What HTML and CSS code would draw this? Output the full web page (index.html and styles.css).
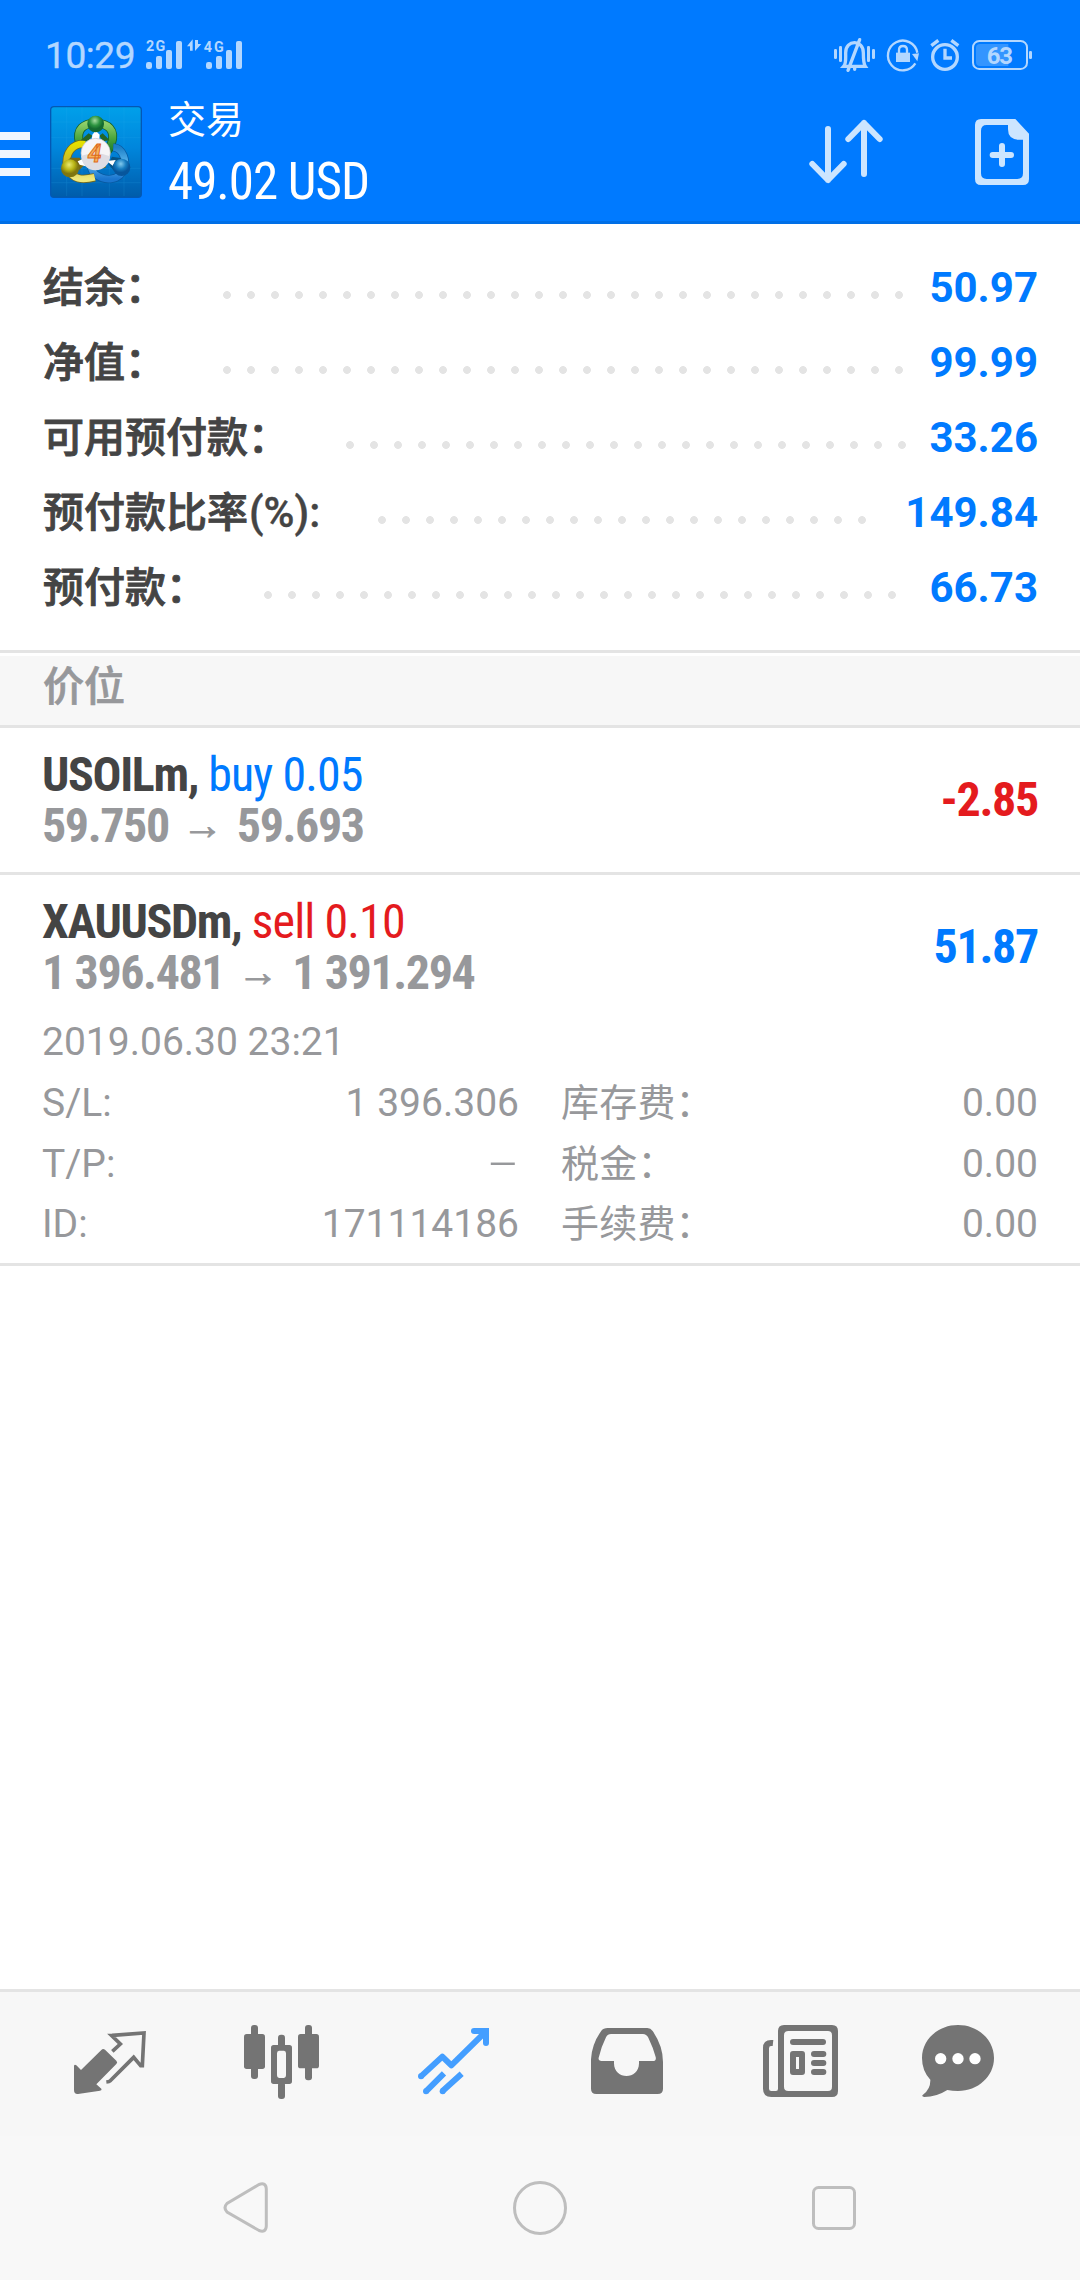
FILE: index.html
```html
<!DOCTYPE html>
<html lang="zh-CN">
<head>
<meta charset="utf-8">
<title>交易</title>
<link rel="stylesheet" href="styles.css">
</head>
<body>
<div class="screen">
  <header class="header">
    <div class="status">
      <span class="clock">10:29</span>
      <svg class="signal" viewBox="435 105 300 120">
        <g class="st">
          <rect x="438" y="186" width="18" height="21" rx="7"/><rect x="468" y="168" width="18" height="39" rx="6"/><rect x="498" y="150" width="18" height="57" rx="6"/><rect x="528" y="123" width="18" height="84" rx="6"/>
          <rect x="618" y="186" width="18" height="21" rx="7"/><rect x="648" y="168" width="18" height="39" rx="6"/><rect x="678" y="150" width="18" height="57" rx="6"/><rect x="708" y="123" width="18" height="84" rx="6"/>
          <path d="M561 139L578 118V152H570V139ZM585 120H594V132H604L585 153Z"/>
          <text x="438" y="152" textLength="58">2G</text><text x="611" y="155" textLength="60">4G</text>
        </g>
      </svg>
      <svg class="indicators" viewBox="150 105 630 120">
        <g class="st">
          <rect x="162" y="147" width="9" height="30" rx="4"/><rect x="177" y="138" width="9" height="48" rx="4"/><rect x="261" y="138" width="9" height="48" rx="4"/><rect x="276" y="147" width="9" height="30" rx="4"/>
          <rect x="348" y="158" width="42" height="28"/>
          <path d="M396 162L417 160L412 184Z"/>
          <rect x="747" y="153" width="9" height="24" rx="4"/>
        </g>
        <g class="st-line">
          <path stroke-width="10" d="M191 199C199 190 197 178 197 158C197 118 250 118 250 158C250 178 250 190 256 199Z"/>
          <path stroke-width="10" stroke-linecap="round" d="M239 119L204 211M224 204V208"/>
          <path stroke-width="7" d="M406 190A44.500 44.500 0 1 1 412 158M357 159V150Q357 138 369 138Q381 138 381 150V159"/>
          <circle cx="495" cy="171" r="37" stroke-width="10"/>
          <path stroke-width="10" d="M495 146V174H516M454 137L475 121M535 137L514 121"/>
          <rect x="579" y="123" width="162" height="84" rx="19" stroke-width="6"/>
        </g>
        <path fill="#3395ff" d="M600 132H685V198H600Q588 198 588 186V144Q588 132 600 132Z"/>
        <text class="battery" x="620" y="192" textLength="79">63</text>
      </svg>
    </div>
    <div class="appbar">
      <svg class="menu" viewBox="0 0 30 44"><path fill="#f0f6ff" d="M0 0H30V8H0ZM0 18H30V26H0ZM0 36H30V44H0Z"/></svg>
      <svg class="logo" viewBox="150 318 276 276">
        <defs>
          <linearGradient id="bg" x2="0" y2="1"><stop offset="0" stop-color="#00a0ea"/><stop offset=".45" stop-color="#0086dc"/><stop offset="1" stop-color="#005caa"/></linearGradient>
          <linearGradient id="green" x2="0" y2="1"><stop offset="0" stop-color="#90d06a"/><stop offset=".5" stop-color="#4aa53c"/><stop offset="1" stop-color="#13702a"/></linearGradient>
          <linearGradient id="gold" x2="0" y2="1"><stop offset="0" stop-color="#e4e000"/><stop offset=".5" stop-color="#cbb82c"/><stop offset="1" stop-color="#eee87c"/></linearGradient>
          <linearGradient id="blue" x2="0" y2="1"><stop offset="0" stop-color="#1c7fc8"/><stop offset=".5" stop-color="#5bb7ee"/><stop offset="1" stop-color="#1a75cf"/></linearGradient>
          <radialGradient id="gball" cx=".45" cy=".3"><stop offset="0" stop-color="#a5dca0"/><stop offset=".6" stop-color="#2c9440"/><stop offset="1" stop-color="#146a30"/></radialGradient>
          <radialGradient id="yball" cx=".45" cy=".3"><stop offset="0" stop-color="#eaea70"/><stop offset=".6" stop-color="#b7b314"/><stop offset="1" stop-color="#7f7610"/></radialGradient>
          <radialGradient id="bball" cx=".45" cy=".3"><stop offset="0" stop-color="#82caee"/><stop offset=".6" stop-color="#167cc0"/><stop offset="1" stop-color="#07569c"/></radialGradient>
        </defs>
        <rect x="152" y="320" width="272" height="272" rx="10" fill="url(#bg)" stroke="#0358b4" stroke-width="4"/>
        <path stroke="#35b2f0" stroke-width="1.500" opacity=".3" d="M200 322V588M246 322V588M328 322V588M372 322V588M154 366H422M154 413H422M154 505H422M154 548H422"/>
        <path fill="none" stroke="#14602b" stroke-width="27" d="M238 428C228 385 252 371 287 369C322 371 349 388 334 432Q328 449 312 462"/>
        <path fill="none" stroke="url(#green)" stroke-width="22" d="M238 428C228 385 252 371 287 369C322 371 349 388 334 432Q328 449 312 462"/>
        <path fill="none" stroke="#075aa2" stroke-width="25" d="M340 442C370 444 380 483 372 506C357 544 315 544 286 523Q276 516 273 499"/>
        <path fill="none" stroke="url(#blue)" stroke-width="20" d="M340 442C370 444 380 483 372 506C357 544 315 544 286 523Q276 516 273 499"/>
        <path fill="none" stroke="#75691b" stroke-width="25" d="M256 432C216 428 195 462 201 500C217 541 247 541 284 532"/>
        <path fill="none" stroke="url(#gold)" stroke-width="20" d="M256 432C216 428 195 462 201 500C217 541 247 541 284 532"/>
        <path fill="#246626" d="M266 400L242 421L265 424L277 407ZM308 400L329 421L309 424L298 407Z"/>
        <path fill="#786914" d="M211 473L199 486L233 493L236 512L253 495L239 473ZM287 492H317V503L296 508Z"/>
        <path fill="#075486" d="M336 470L361 474L385 493L360 479L342 512L325 493Z"/>
        <path fill="#fff" d="M277 404L287 392L299 404L297 423H275ZM233 484L248 477L257 499L239 494ZM320 483L347 480L338 497Z"/>
        <circle cx="287" cy="372" r="25" fill="url(#gball)"/><circle cx="210" cy="505" r="27" fill="url(#yball)"/><circle cx="365" cy="502" r="26" fill="url(#bball)"/>
        <circle cx="287" cy="459" r="44" fill="#f6f5f7" stroke="#c2c0c4" stroke-width="2"/>
        <path d="M244 467Q288 451 330 469A43 43 0 0 1 244 467Z" fill="#dedde4"/>
        <text class="four" x="263" y="485" textLength="41" lengthAdjust="spacingAndGlyphs">4</text>
      </svg>
      <div class="titles"><div class="title">交易</div><div class="equity"><span class="cond">49.02 USD</span></div></div>
      <svg class="sort" viewBox="84 354 228 204"><path fill="none" stroke="#cce5ff" stroke-width="18" stroke-linecap="round" stroke-linejoin="round" d="M144 387V540M97 492L144 540L191 492M252 522V369M205 417L252 369L299 417"/></svg>
      <svg class="add" viewBox="582 354 168 204"><path fill="#cce5ff" fill-rule="evenodd" d="M603 357H706L747 401V537Q747 555 729 555H603Q585 555 585 537V375Q585 357 603 357ZM620 375Q603 375 603 392V520Q603 537 620 537H712Q729 537 729 520V419H714Q684 417 684 388V375Z"/><path stroke="#cce5ff" stroke-width="18" stroke-linecap="round" d="M638 465H693M666 438V492"/></svg>
    </div>
  </header>

  <main class="content">
    <section class="summary">
      <div class="row"><span class="label">结余：</span><i class="leader" style="--dots:29"></i><span class="value">50.97</span></div>
      <div class="row"><span class="label">净值：</span><i class="leader" style="--dots:29"></i><span class="value">99.99</span></div>
      <div class="row"><span class="label">可用预付款：</span><i class="leader" style="--dots:24"></i><span class="value">33.26</span></div>
      <div class="row"><span class="label">预付款比率<span class="latin">(%):</span></span><i class="leader" style="--dots:21"></i><span class="value">149.84</span></div>
      <div class="row"><span class="label">预付款：</span><i class="leader" style="--dots:27"></i><span class="value">66.73</span></div>
    </section>
    <h2 class="section">价位</h2>
    <article class="position">
      <div class="main">
        <div class="deal">
          <div class="line"><span class="cond"><b>USOILm,</b> <span class="buy">buy 0.05</span></span></div>
          <div class="line prices"><span class="cond">59.750</span><span class="arrow">→</span><span class="cond">59.693</span></div>
        </div>
        <div class="profit loss"><span class="cond">-2.85</span></div>
      </div>
    </article>
    <article class="position">
      <div class="main">
        <div class="deal">
          <div class="line"><span class="cond"><b>XAUUSDm,</b> <span class="sell">sell 0.10</span></span></div>
          <div class="line prices"><span class="cond">1 396.481</span><span class="arrow">→</span><span class="cond">1 391.294</span></div>
        </div>
        <div class="profit gain"><span class="cond">51.87</span></div>
      </div>
      <div class="details">
        <div class="time">2019.06.30 23:21</div>
        <div class="pair"><span>S/L:</span><span>1 396.306</span></div><div class="pair"><span class="cjk">库存费：</span><span>0.00</span></div>
        <div class="pair"><span>T/P:</span><span class="dash">–</span></div><div class="pair"><span class="cjk">税金：</span><span>0.00</span></div>
        <div class="pair"><span>ID:</span><span>171114186</span></div><div class="pair"><span class="cjk">手续费：</span><span>0.00</span></div>
      </div>
    </article>
  </main>

  <nav class="tabs">
    <svg viewBox="90 123 240 240"><path fill="#747474" d="M102 257Q104 252 109 256L123 270L184 210Q189 204 195 209L229 242Q234 247 229 252L169 313L184 326Q187 330 180 332L114 342Q102 343 102 330Z"/><path fill="none" stroke="#747474" stroke-width="11" d="M217 214L241 192L215 167Q216 167 218 166L312 159L307 257L302 257L281 232L210 303Q208 305 199 306"/></svg>
    <svg viewBox="609 123 240 240"><g fill="#747474"><rect x="612" y="162" width="63" height="105" rx="8"/><rect x="633" y="135" width="21" height="162" rx="9"/><rect x="774" y="162" width="63" height="103" rx="8"/><rect x="795" y="135" width="21" height="166" rx="9"/><rect x="714" y="164" width="21" height="40" rx="9"/><rect x="714" y="305" width="21" height="52" rx="9"/><path fill-rule="evenodd" d="M701 195H748Q756 195 756 203V304Q756 312 748 312H701Q693 312 693 304V203Q693 195 701 195ZM717 212Q711 212 711 220V286Q711 294 717 294H732Q738 294 738 286V220Q738 212 732 212Z"/></g></svg>
    <svg viewBox="1128 123 240 240"><g fill="none" stroke="#449eff" stroke-width="18"><path stroke-linejoin="round" d="M1142 290L1207 230L1234 256L1338 154"/><path d="M1302 153H1338V189"/><path d="M1158 334L1212 280M1207 334L1265 281"/></g><g fill="#449eff"><path d="M1329 144H1347V162Z"/><circle cx="1302" cy="153" r="9"/><circle cx="1338" cy="189" r="9"/><circle cx="1143" cy="289" r="9"/><circle cx="1158" cy="334" r="9"/><circle cx="1208" cy="334" r="9"/></g></svg>
    <svg viewBox="147 123 240 240"><path fill="#747474" fill-rule="evenodd" d="M203 144H322Q332 144 338 153Q369 198 369 246V326Q369 342 353 342H169Q153 342 153 326V238Q155 193 184 152Q190 144 203 144ZM213 162Q203 162 198 172Q183 202 176 233Q174 243 185 243H222V250C222 301 297 301 297 250V243H338Q350 243 347 231Q340 204 325 173Q319 162 309 162Z"/></svg>
    <svg viewBox="666 123 240 240"><g fill="#747474"><path fill-rule="evenodd" d="M732 135H876Q894 135 894 153V333Q894 351 876 351H694Q669 351 669 326V204Q669 180 693 180H700L698 198H693Q687 198 687 205V326Q687 333 694 333H708Q714 333 714 326V153Q714 135 732 135ZM745 153Q732 153 732 166V320Q732 333 745 333H864Q876 333 876 320V166Q876 153 864 153Z"/><rect x="750" y="177" width="108" height="18" rx="9"/><rect x="813" y="213" width="46" height="18" rx="9"/><rect x="813" y="240" width="46" height="18" rx="9"/><rect x="813" y="267" width="46" height="18" rx="9"/><path fill-rule="evenodd" d="M759 213H786Q795 213 795 222V276Q795 285 786 285H759Q750 285 750 276V222Q750 213 759 213ZM768 231V267H777V231Z"/></g></svg>
    <svg viewBox="1134 123 240 240"><path fill="#747474" d="M1254 135C1314 135 1362 179 1362 234C1362 289 1314 333 1254 333Q1237 333 1222 330Q1189 351 1153 351Q1143 349 1149 344Q1172 327 1171 299Q1146 273 1146 234C1146 179 1194 135 1254 135Z"/><g fill="#fff"><circle cx="1202" cy="236" r="17"/><circle cx="1254" cy="236" r="17"/><circle cx="1305" cy="236" r="17"/></g></svg>
  </nav>
  <footer class="sysnav">
    <svg viewBox="0 0 60 60"><path d="M43 6.500L11 25.500Q7 29.700 11 34L43 52.500Q50 55 50.300 48V11Q50 4 43 6.500Z"/></svg>
    <svg viewBox="0 0 60 60"><circle cx="30" cy="30" r="25.500"/></svg>
    <svg viewBox="0 0 60 60"><rect x="9.500" y="9.500" width="41" height="41" rx="5"/></svg>
  </footer>
</div>
</body>
</html>
```
FILE: styles.css
```css
* { box-sizing: border-box; }
body { margin: 0; background: #fff; font-family: Roboto, "Noto Sans CJK SC", sans-serif; }
svg { display: block; flex: none; }
.screen { width: 1080px; height: 2280px; display: flex; flex-direction: column; }

.header { height: 224px; background: #007aff; border-bottom: 3px solid #006fe6; }
.status { height: 97px; padding: 35px 40px 0 45px; display: flex; color: #b3d7ff; }
.clock { width: 100px; font-size: 37px; line-height: 42px; letter-spacing: -.4px; -webkit-text-stroke: .4px; }
.signal { width: 100px; height: 40px; }
.indicators { width: 210px; height: 40px; margin-left: auto; }
.st { fill: #b3d7ff; }
.st text { font-size: 43px; font-weight: 700; }
.st-line { fill: none; stroke: #b3d7ff; }
.battery { font-size: 72px; font-weight: 700; fill: #b3d7ff; }

.appbar { display: flex; align-items: flex-start; }
.menu { width: 30px; height: 44px; margin-top: 35px; }
.logo { width: 92px; height: 92px; margin: 9px 26px 0 20px; }
.four { font-size: 76px; font-weight: 700; font-style: italic; fill: #f6b45c; stroke: #df6a1c; stroke-width: 3px; }
.titles { flex: 1; color: #fff; }
.title { font-size: 38px; line-height: 47px; }
.equity { font-size: 51px; line-height: 75px; white-space: nowrap; letter-spacing: -1px; }
.sort { width: 76px; height: 68px; margin: 21px 90px 0 0; }
.add { width: 56px; height: 68px; margin: 21px 50px 0 0; }

.cond { font-family: "Roboto Condensed", Roboto, sans-serif; font-stretch: condensed; }

.summary { height: 429px; padding: 26px 42px 0; border-bottom: 3px solid #e4e4e4; }
.row { height: 75px; display: flex; align-items: center; }
.label { padding: 2px 0 0 1px; font-size: 41px; line-height: 73px; font-weight: 500; color: #444; -webkit-text-stroke: .9px; }
.latin { font-size: 42px; line-height: 1; margin: 0 1px; -webkit-text-stroke: .4px; }
.leader { width: calc(var(--dots) * 24px); height: 8px; margin: 15px 0 0 49px; background: radial-gradient(circle at 12px 4px, #e4e4e4 3.5px, transparent 4.300px) 0 0 / 24px 8px; }
.value { margin-left: auto; font-size: 42px; font-weight: 700; color: #007aff; }

.section { height: 72px; margin: 3px 0 0; padding-left: 43px; background: #f7f7f7; border-bottom: 3px solid #e4e4e4; font-size: 41px; line-height: 63px; font-weight: 500; color: #97989b; -webkit-text-stroke: .7px; }

.position { padding: 21px 42px 0; border-bottom: 3px solid #e4e4e4; color: #97989b; }
.main { height: 123px; display: flex; justify-content: space-between; }
.line { font-size: 48px; line-height: 51px; height: 51px; white-space: nowrap; letter-spacing: -.9px; }
.line b { color: #444; letter-spacing: -1.350px; }
.buy { color: #007aff; }
.sell { color: #e41b1e; }
.prices { display: flex; font-weight: 700; letter-spacing: -1.400px; }
.arrow { width: 68px; text-align: center; font: 400 41px/51px "Liberation Sans", sans-serif; letter-spacing: 0; -webkit-text-stroke: .9px; }
.profit { font-size: 48px; line-height: 102px; font-weight: 700; letter-spacing: -1.300px; }
.loss { color: #e41b1e; }
.gain { color: #007aff; }
.details { margin-top: -7px; height: 251px; display: grid; grid-template-columns: 477px 477px; column-gap: 42px; grid-template-rows: 61px 61px 61px 60px; font-size: 39px; line-height: 61px; }
.time { grid-column: 1 / 3; }
.pair { display: flex; justify-content: space-between; }
.pair:nth-last-child(-n+2) { line-height: 59px; }
.cjk { font-size: 38px; letter-spacing: .2px; }
.dash { font-size: 49px; font-weight: 300; }

.tabs { height: 147px; margin-top: auto; padding: 29px 0 0 70px; display: grid; grid-template-columns: repeat(4, 173px) 156px 80px; align-items: start; background: #f7f7f7; border-top: 3px solid #e4e4e4; }
.tabs svg { width: 80px; height: 80px; }
.sysnav { height: 144px; padding: 0 216px; display: flex; justify-content: space-between; align-items: center; background: #f8f8f8; }
.sysnav svg { width: 60px; height: 60px; fill: none; stroke: #bebebe; stroke-width: 3px; }
```
